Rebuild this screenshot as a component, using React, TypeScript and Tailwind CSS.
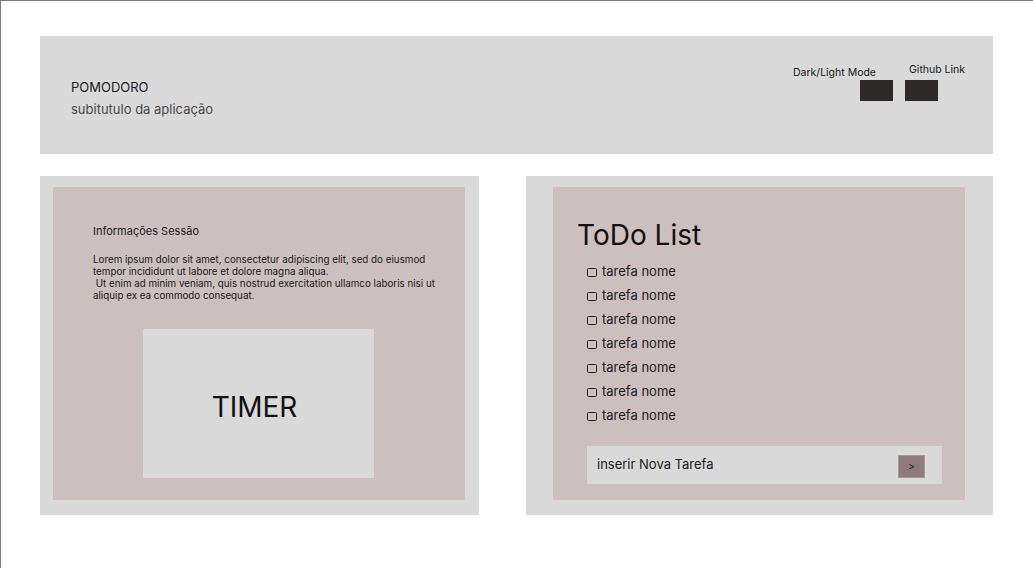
import React from 'react';

const tasks = Array.from({ length: 7 }, () => 'tarefa nome');

const Header = () => (
  <div className="ml-[39px] mt-[35px] flex h-[118px] w-[953px] justify-between bg-[#d9d9d9]">
    <div className="pl-[31px] pt-[43px]">
      <div className="text-[13px] leading-[16px] text-[#1a1a1a]">POMODORO</div>
      <div className="mt-[6px] text-[13px] leading-[16px] text-[#4a4a4a]">subitutulo da aplicação</div>
    </div>

    <div className="flex gap-[12px] pr-[26px]">
      <div className="flex w-[100px] flex-col pt-[31px]">
        <span className="whitespace-nowrap text-[10.5px] leading-[12px] text-[#1a1a1a]">Dark/Light Mode</span>
        <button className="ml-[67px] mt-[1px] h-[21px] w-[33px] bg-[#2f2a2a]" />
      </div>
      <div className="flex w-[62px] flex-col pt-[28px]">
        <span className="ml-[4px] whitespace-nowrap text-[10.5px] leading-[12px] text-[#1a1a1a]">Github Link</span>
        <button className="mt-[4px] h-[21px] w-[33px] bg-[#2f2a2a]" />
      </div>
    </div>
  </div>
);

const SessionPanel = () => (
  <div className="h-[339px] w-[439px] bg-[#d9d9d9] pl-[13px] pt-[11px]">
    <div className="flex h-[313px] w-[412px] flex-col bg-[#cbbfbf] pl-[40px] pt-[37px]">
      <h3 className="text-[11px] leading-[14px] text-[#1a1a1a]">Informações Sessão</h3>
      <p className="mt-[16px] whitespace-pre text-[9.8px] leading-[12px] text-[#1a1a1a]">
        {'Lorem ipsum dolor sit amet, consectetur adipiscing elit, sed do eiusmod\ntempor incididunt ut labore et dolore magna aliqua.\n Ut enim ad minim veniam, quis nostrud exercitation ullamco laboris nisi ut\naliquip ex ea commodo consequat.'}
      </p>
      <div className="ml-[50px] mt-[27px] flex h-[149px] w-[231px] items-center justify-center bg-[#d9d9d9] pr-[8px] pt-[6px]">
        <span className="text-[28px] leading-[34px] text-[#111]">TIMER</span>
      </div>
    </div>
  </div>
);

const TodoPanel = () => (
  <div className="h-[339px] w-[467px] bg-[#d9d9d9] pl-[27px] pt-[11px]">
    <div className="flex h-[313px] w-[412px] flex-col bg-[#cbbfbf] pt-[30px]">
      <h2 className="pl-[24px] text-[28px] leading-[36px] text-[#111]">ToDo List</h2>
      <ul className="mt-[7px] pl-[34px]">
        {tasks.map((t, i) => (
          <li key={i} className="flex h-[24px] items-center gap-[5px] text-[13px] text-[#1a1a1a]">
            <span className="h-[9px] w-[10px] rounded-[1.5px] border-[1.5px] border-[#222]" />
            <span>{t}</span>
          </li>
        ))}
      </ul>
      <div className="ml-[34px] mt-[18px] flex h-[38px] w-[355px] items-center justify-between bg-[#d9d9d9] pl-[10px] pr-[17px]">
        <span className="text-[13px] text-[#1a1a1a]">inserir Nova Tarefa</span>
        <button className="mt-[3px] flex h-[23px] w-[27px] items-center justify-center border border-[#a89999] bg-[#8f7b7b] text-[10px] text-[#1a1a1a]">
          &gt;
        </button>
      </div>
    </div>
  </div>
);

export default function App() {
  return (
    <div
      className="h-[568px] w-[1033px] overflow-hidden border-l border-t border-[#7d7d7d] bg-white"
      style={{ fontFamily: 'Inter, "Noto Sans", sans-serif' }}
    >
      <Header />
      <div className="ml-[39px] mt-[22px] flex gap-[47px]">
        <SessionPanel />
        <TodoPanel />
      </div>
    </div>
  );
}
